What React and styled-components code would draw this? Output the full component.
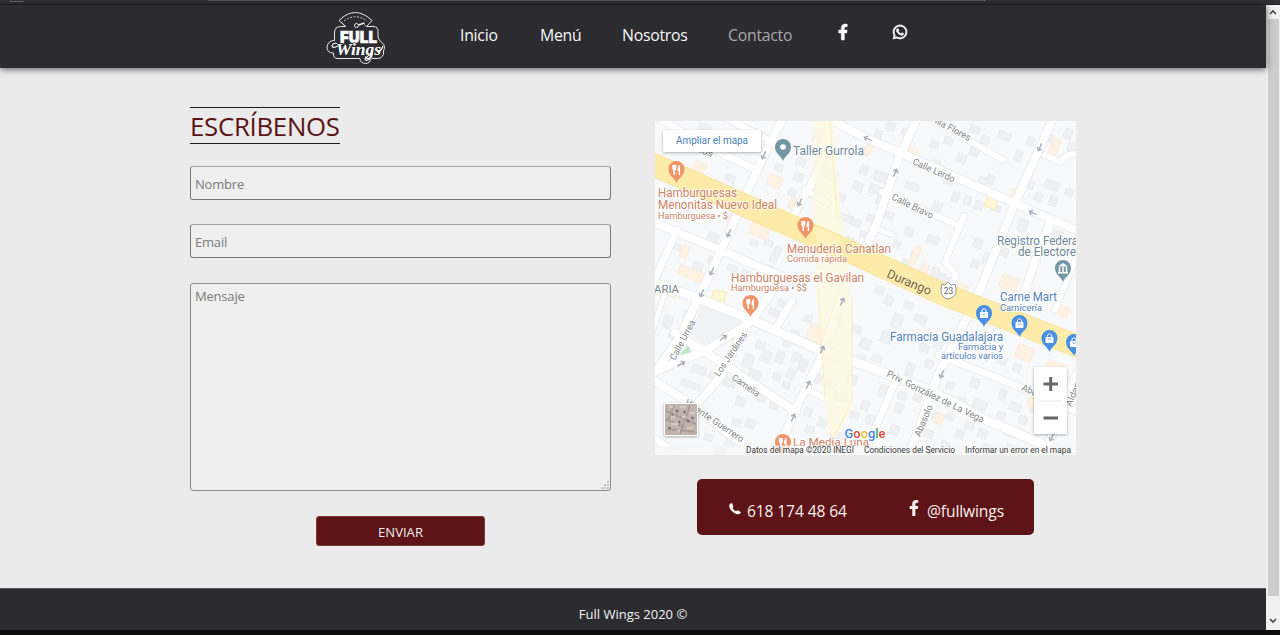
import React from "react";
import styled, { createGlobalStyle } from "styled-components";
import { FaFacebookF, FaWhatsapp } from "react-icons/fa";

const GlobalStyle = createGlobalStyle`
  * { box-sizing: border-box; }
  body {
    margin: 0;
    overflow: hidden;
    background: #0d0d0e;
    font-family: "Segoe UI", "Open Sans", "Noto Sans", sans-serif;
  }
`;

const Browser = styled.div`
  display: flex;
  flex-direction: column;
  width: 1280px;
  height: 635px;
`;

const Toolbar = styled.div`
  display: flex;
  flex: none;
  gap: 190px;
  height: 5px;
  padding-left: 9px;
  background: #303033;
  border-bottom: 1px solid #232326;
`;

const ToolbarButton = styled.div`
  width: 15px;
  height: 2px;
  border-bottom: 1px solid #68696c;
  border-radius: 0 0 8px 8px;
`;

const AddressBar = styled.div`
  width: 778px;
  height: 1px;
  margin-left: -6px;
  background: #55565a;
`;

const Viewport = styled.div`
  display: flex;
  height: 625px;
`;

const Page = styled.div`
  display: flex;
  flex-direction: column;
  width: 1266px;
  background: #ebebeb;
`;

const Header = styled.header`
  z-index: 1;
  display: flex;
  flex: none;
  height: 63px;
  padding-left: 326px;
  background: #2c2b30;
  box-shadow: 0 1px 7px rgba(0, 0, 0, 0.65);
`;

const LogoLink = styled.a`
  width: 134px;
  padding-top: 6px;
`;

const Nav = styled.nav`
  display: flex;
  align-items: flex-start;
  padding-top: 19px;
`;

const NavLink = styled.a`
  width: ${(p) => p.$w}px;
  font-size: 15.8px;
  letter-spacing: -0.25px;
  line-height: 22px;
  color: ${(p) => (p.$active ? "#a9a9ad" : "#f7f7f7")};
`;

const NavIcon = styled.a`
  display: flex;
  width: ${(p) => p.$w}px;
  font-size: 16px;
  line-height: 16px;
  color: #fff;
  svg {
    stroke: #fff;
    stroke-width: ${(p) => p.$bold || 0};
    overflow: visible;
  }
`;

const Main = styled.main`
  display: flex;
  flex: 1;
  gap: 44px;
  padding-left: 190px;
`;

const Form = styled.form`
  display: flex;
  flex-direction: column;
  align-items: flex-start;
  width: 421px;
  padding-top: 39px;
`;

const Title = styled.h1`
  width: 150px;
  height: 37px;
  margin: 0 0 22px;
  border: solid #1d1d1f;
  border-width: 1px 0;
  color: #5a1417;
  font-size: 25.8px;
  font-weight: 400;
  line-height: 37px;
  letter-spacing: -0.28px;
  white-space: nowrap;
`;

const Field = styled.input`
  width: 100%;
  height: 34px;
  margin: 0 0 24px;
  padding: 1px 4px 0;
  border: 1px solid #77797a;
  border-top-color: #a3a4a5;
  border-radius: 3px;
  background: #efefef;
  font: 13px "Segoe UI", "Open Sans", sans-serif;
  letter-spacing: -0.2px;
  &::placeholder { color: #7b7b7b; }
`;

const MessageBox = styled.div`
  position: relative;
  width: 100%;
  height: 234px;
`;

const Message = styled.textarea`
  width: 100%;
  height: 208px;
  margin: 1px 0 25px;
  padding: 3px 4px;
  border: 1px solid #8a8b8c;
  border-radius: 3px;
  background: #efefef;
  font: 13px/18px "Segoe UI", "Open Sans", sans-serif;
  letter-spacing: -0.2px;
  resize: none;
  &::placeholder { color: #7b7b7b; }
`;

const Grip = styled.svg`
  position: absolute;
  right: 2px;
  top: 199px;
`;

const Submit = styled.button`
  align-self: center;
  width: 169px;
  height: 30px;
  padding: 1px 0 0;
  border: 1px solid #7e3a2c;
  border-radius: 3px;
  background: #5e1416;
  color: #f3eeee;
  font: 13.1px "Segoe UI", "Open Sans", sans-serif;
`;

const Aside = styled.section`
  display: flex;
  flex-direction: column;
  align-items: center;
  width: 421px;
  padding-top: 53px;
`;

const MapFrame = styled.div`
  height: 334px;
  margin-bottom: 24px;
`;

const Contact = styled.div`
  display: flex;
  width: 337px;
  height: 56px;
  padding: 21px 0 0 32px;
  border-radius: 5px;
  background: #5e1416;
`;

const ContactItem = styled.a`
  display: flex;
  flex: none;
  align-items: flex-start;
  gap: ${(p) => p.$gap}px;
  width: ${(p) => p.$w}px;
  color: #f5efef;
  font-size: 15.6px;
  letter-spacing: -0.12px;
  line-height: 22px;
  white-space: nowrap;
`;

const PhoneIcon = styled.svg`
  flex: none;
  margin-top: 3px;
`;

const Footer = styled.footer`
  flex: none;
  height: 42px;
  padding-top: 16px;
  border-top: 1px solid #5e5e5f;
  background: #2c2b30;
  color: #f2f2f2;
  font-size: 13px;
  line-height: 18px;
  text-align: center;
`;

const Scrollbar = styled.div`
  display: flex;
  flex-direction: column;
  align-items: center;
  width: 14px;
  background: #f0f0f0;
`;

const Thumb = styled.div`
  width: 11px;
  height: 577px;
  background: #cdcdcd;
`;

const Arrow = styled.svg`
  flex: none;
  display: block;
  width: 14px;
  height: 14px;
  margin-top: ${(p) => (p.$down ? 18 : 0)}px;
  transform: ${(p) => (p.$down ? "rotate(180deg)" : "none")};
`;

function Logo() {
  return (
    <svg width="60" height="54" viewBox="0 0 60 54">
      <g fill="none" stroke="#e8e8e8" strokeWidth="1">
        <path d="M13 9.500Q29 -6.500 46 9.500L40.500 15.500H47Q52.500 15.500 52 21V26Q53 30 56 31.500Q60 35 57.500 40V43Q56 48 50 47.500H45Q44 52.500 39.500 52.500Q34 52 34 47.500H11Q7 47 7.500 42Q1 42 1 36Q2 29.500 8.500 29.500V22Q8.500 15.500 14.500 15.500H19.500Z" />
        <path d="M19.500 15.500L15 10.500M40.500 15.500L38 13.500" strokeWidth=".6" />
        <path d="M18 10Q29 1.500 41 10" strokeWidth=".8" strokeDasharray="2 1.500" />
        <circle cx="30.500" cy="14.500" r="2" />
        <path d="M32.500 14L38.500 12" strokeWidth="1.400" />
      </g>
      <text x="14" y="32" textLength="37" lengthAdjust="spacingAndGlyphs" fontFamily="Inter, sans-serif" fontWeight="900" fontSize="16.500" fill="#fff" stroke="#fff" strokeWidth=".5">FULL</text>
      <text x="10" y="44" textLength="45" lengthAdjust="spacingAndGlyphs" fontFamily="Liberation Serif, serif" fontStyle="italic" fontWeight="700" fontSize="17" fill="#fff" stroke="#2c2b30" strokeWidth="1.400" paintOrder="stroke">Wings</text>
      <path d="M12 35Q6 38 6 34.500Q7 31.500 11 32.500M44 48Q39 51 39 47.500Q42 44 47 43M52 41Q56 39 57 35" fill="none" stroke="#fff" strokeWidth="1.100" />
    </svg>
  );
}

const streets = [
  ["M655 223L727 253L790 280", 8],
  ["M640 278L698 298L752 320L815 348L866 366L932 391L982 418L1060 452", 9],
  ["M786 112L765 153L745 197L727 237L712 270L698 298L681 336L655 372", 8],
  ["M655 116L710 148L757 170", 7],
  ["M722 116L768 140L786 150", 7],
  ["M825 117L866 138L905 155L1012 202L1080 232", 8],
  ["M928 117L1003 160", 6],
  ["M920 112L898 160L878 220L866 248", 8],
  ["M822 160L812 183L798 207L790 222", 7],
  ["M805 190L828 203", 6],
  ["M882 192L957 225", 6],
  ["M964 216L945 262L956 275L952 286", 6],
  ["M1056 112L1015 203L982 285L968 315L938 375L908 458", 8],
  ["M1050 223L1038 252L1022 300", 8],
  ["M1045 155L1060 162Q1066 153 1078 154", 6],
  ["M873 227L893 235", 5],
  ["M938 355L1000 379L1080 413", 7],
  ["M895 382L868 446", 7],
  ["M1080 368L1060 410L1044 460", 8],
  ["M1076 258L1055 310", 6],
  ["M750 315L722 375L685 418", 8],
  ["M648 374L705 351L752 321L777 284", 8],
  ["M792 301L776 328", 7],
  ["M675 333L705 352L748 380L796 412", 8],
  ["M846 285L822 355L793 415L774 460", 8],
  ["M806 389L830 401L852 408", 6],
  ["M650 378L688 402L750 450", 8],
  ["M650 436L685 458", 7],
  ["M677 230L650 290", 7],
  ["M648 345L664 296", 5],
];

const blocks = [
  [675,128,11,7],[699,124,12,7],[736,130,9,8],[748,143,10,6],[712,182,13,8],[725,175,10,7],[660,196,12,8],[683,211,10,7],[724,190,8,9],
  [775,164,8,7],[796,158,10,8],[814,130,9,12],[794,173,9,8],[807,185,8,12],[788,189,8,7],[821,170,17,9],[835,193,10,8],[848,128,10,8],[860,147,9,8],
  [853,182,10,9],[838,214,14,7],[851,219,10,7],[860,232,12,6],[845,237,8,6],[860,165,8,9],[728,215,10,9],[707,233,11,12],[750,240,8,6],[764,240,9,6],[774,247,7,9],[770,255,7,7],[765,265,7,6],[692,262,10,13],[708,257,9,7],
  [727,265,10,6],[742,270,10,5],[673,244,8,6],[886,122,9,8],[875,130,7,9],[902,129,9,7],[930,141,9,7],[944,137,9,8],[957,154,9,9],[970,126,10,7],[970,147,9,9],[998,132,13,8],[1015,150,7,11],[981,136,8,8],[1027,137,7,9],
  [874,172,14,10],[869,185,13,9],[876,198,10,7],[905,183,14,7],[918,160,9,7],[932,160,8,7],[944,177,9,8],[952,192,7,10],[964,196,7,9],[975,201,8,9],[987,175,7,9],[979,177,8,7],[898,198,8,7],[933,202,9,9],[912,204,8,8],[885,212,9,7],[867,215,8,7],
  [993,205,8,7],[1006,215,7,9],[1018,219,9,13],[1034,193,9,8],[1045,181,14,9],[1028,181,6,8],[1049,196,8,10],[1065,189,8,7],[1045,134,8,8],[1064,129,8,10],[1068,143,8,9],
  [905,228,8,8],[927,236,12,8],[893,240,7,8],[911,251,8,7],[974,238,8,10],[983,253,10,12],[971,260,8,8],[931,268,7,11],[938,273,7,10],[946,278,6,8],[902,259,8,7],[1000,248,8,8],[1033,239,9,9],[1061,248,8,7],[1053,231,10,8],
  [683,312,12,8],[693,324,19,13],[683,340,7,7],[663,315,9,13],[669,331,9,8],[666,353,9,6],[681,382,20,6],[692,366,14,8],[709,373,8,6],[724,378,12,9],[736,397,9,9],[746,419,9,9],[732,419,9,7],[758,394,8,8],[770,401,8,8],[749,370,12,9],[761,351,10,11],[776,351,8,12],[792,353,9,9],[783,339,8,8],[756,341,9,8],[743,354,10,14],[773,373,8,7],[787,369,8,10],[782,382,8,6],[799,359,8,12],[815,330,8,9],[804,315,8,7],[790,330,9,7],[769,309,10,7],[778,300,8,7],
  [830,319,11,9],[852,325,9,8],[860,339,11,10],[856,355,9,8],[847,375,10,9],[832,393,15,13],[824,381,12,7],[812,374,10,9],[850,412,9,7],[861,401,8,9],[804,408,8,8],[818,418,9,9],[834,432,9,8],[805,426,9,7],[725,439,9,8],[704,434,9,7],[714,447,10,8],
  [872,355,10,7],[881,332,10,11],[892,314,10,14],[914,315,13,8],[905,335,9,7],[919,344,10,8],[906,363,8,13],[925,360,8,8],[934,341,9,8],[879,385,8,12],[898,392,9,8],[895,403,8,10],[913,394,8,7],[946,382,8,8],[971,378,8,10],[957,397,9,7],[973,400,14,9],[999,389,7,11],[1009,403,12,8],[997,412,8,7],[1019,416,8,8],[1004,428,9,8],[965,422,9,8],[978,429,9,9],[956,430,8,8],[946,413,8,7],[932,413,9,8],[924,430,9,8],[941,441,8,7],[983,445,10,7],[1006,445,9,8],[890,425,9,10],[873,448,8,6],[959,342,8,6],[998,357,9,7],[981,354,8,6],[1013,364,8,8],[885,296,8,9],[875,286,9,8],[904,302,9,7],[1030,405,8,8],[866,415,9,9],
];

const shops = [
  [693,162,12,14],[768,176,14,11],[750,224,19,13],[681,245,7,13],[678,269,27,10],[789,200,14,10],[908,148,9,9],[1011,190,10,9],[1050,138,8,20],[866,143,6,11],[912,246,6,19],[920,264,8,11],[1000,276,18,14],[956,284,12,9],[808,326,18,16],[1016,346,17,14],[1046,362,18,12],[1028,398,8,9],[935,413,8,11],[1055,306,14,10],[788,226,10,12],[666,289,10,8],
];

const arrows = [
  [764,155,205],[800,202,205],[729,233,205],[712,271,205],[895,173,25],[868,139,-65],[1040,147,205],[1033,213,-65],[702,293,205],[723,338,55],[681,364,60],[842,302,25],[822,350,25],[808,385,25],[793,418,25],[942,374,205],[1052,437,205],
];

function Label({ x, y, w, size = 11.5, color = "#cb8467", rotate = 0, children }) {
  return (
    <text
      x={x}
      y={y}
      textLength={w}
      lengthAdjust="spacingAndGlyphs"
      fontSize={size}
      fill={color}
      stroke="#fff"
      strokeWidth="2"
      strokeOpacity=".7"
      paintOrder="stroke"
      transform={rotate ? `rotate(${rotate} ${x} ${y})` : undefined}
    >
      {children}
    </text>
  );
}

function Pin({ x, y, color, kind }) {
  return (
    <g transform={`translate(${x} ${y})`}>
      <path d="M0 11C-1.500 6 -8 4 -8 -3A8 8 0 0 1 8 -3C8 4 1.500 6 0 11Z" fill={color} />
      {kind === "food" && (
        <g>
          <path d="M-4.200 -7H-.2V-3.500Q-.2 -2 -1.400 -1.600V3H-3V-1.600Q-4.200 -2 -4.200 -3.500Z" fill="#fff" />
          <path d="M3.600 -7V3H2.200V-1H1Q.8 -6.500 3.600 -7Z" fill="#fff" />
        </g>
      )}
      {kind === "dot" && <circle cy="-3" r="2.800" fill="#fff" />}
      {kind === "bag" && (
        <g>
          <rect x="-4" y="-4" width="8" height="6" rx=".7" fill="#fff" />
          <path d="M-2 -4V-6Q0 -9 2 -6V-4" fill="none" stroke="#fff" />
          <path d="M-1.500 -2.500Q0 0 1.500 -2.500" fill="none" stroke={color} strokeWidth=".8" />
        </g>
      )}
      {kind === "civic" && (
        <g fill="#fff">
          <path d="M-5 -4.500L0 -8L5 -4.500ZM-5 1H5V2.500H-5Z" />
          <path d="M-3.500 -4V1M0 -4V1M3.500 -4V1" stroke="#fff" strokeWidth="1.500" />
        </g>
      )}
    </g>
  );
}

function CityMap() {
  const blue = "#5483ba";
  const slate = "#70899a";
  const road = "#85878b";
  return (
    <svg width="421" height="334" viewBox="655 121 421 334" fontFamily="Roboto, sans-serif" display="block">
      <rect x="655" y="121" width="421" height="334" fill="#f8f9fb" />
      <g fill="#eff0f2" stroke="#e7e8eb" strokeWidth=".6">
        {blocks.map(([x, y, w, h]) => (
          <rect key={`${x}-${y}`} x={x} y={y} width={w} height={h} transform={`rotate(20 ${x + w / 2} ${y + h / 2})`} />
        ))}
      </g>
      <g fill="#fef2e3" stroke="#fbe9d4" strokeWidth=".6">
        {shops.map(([x, y, w, h]) => (
          <rect key={`${x}-${y}`} x={x} y={y} width={w} height={h} transform={`rotate(22 ${x + w / 2} ${y + h / 2})`} />
        ))}
      </g>
      <path d="M704 298L690 334L706 346L740 322Z" fill="#f1f2f3" />
      <path d="M988 195L998 197L995 210L984 206ZM714 290L727 292L723 305L710 301Z" fill="#fff6d3" stroke="#f7ebb8" />
      <g fill="none" strokeLinecap="round" strokeLinejoin="round">
        {streets.map(([d, w]) => <path key={d} d={d} stroke="#e3e4e8" strokeWidth={w + 1.2} />)}
        {streets.map(([d, w]) => <path key={`${d}-top`} d={d} stroke="#ffffff" strokeWidth={w} />)}
      </g>
      <path d="M679 355L688 346L691 352Z" fill="#b9e6c4" />
      <path d="M814 117H833L840 200L850 288L853 408L834 438L829 435L824 395L817 288L813 240Z" fill="#fff8dd" opacity=".75" />
      <path d="M830 121L837 215M852 300V400L834 438L829 433M818 288L825 398" fill="none" stroke="#fbeebb" strokeWidth=".9" />
      <g fill="none">
        <path d="M645 161L735 201L866 259L945 295L1085 349" stroke="#f6e2a0" strokeWidth="23" />
        <path d="M645 161L735 201L866 259L945 295L1085 349" stroke="#fdeca9" strokeWidth="21.500" />
      </g>
      <path d="M814 226L838 236L846 260L818 248Z" fill="#fff3c4" opacity=".7" />
      <g fill="none" stroke="#aeb0be" strokeWidth="1.500">
        {arrows.map(([x, y, r]) => (
          <path key={`${x}-${y}`} d="M0 4V-4M-2.500 -1L0 -4L2.500 -1" transform={`translate(${x} ${y}) rotate(${r})`} />
        ))}
      </g>

      <Label x={696} y={151} w={17} size={9} color={road} rotate={22}>nos</Label>
      <Label x={929} y={120} w={45} size={9.5} color={road} rotate={28}>Villa Flores</Label>
      <Label x={912} y={164} w={45} size={9.5} color={road} rotate={24}>Calle Lerdo</Label>
      <Label x={891} y={199} w={45} size={9.5} color={road} rotate={26}>Calle Bravo</Label>
      <Label x={675} y={361} w={44} size={9.5} color={road} rotate={-62}>Calle Urrea</Label>
      <Label x={719} y={377} w={51} size={9.5} color={road} rotate={-56}>Los Jardines</Label>
      <Label x={731} y={379} w={32} size={9.5} color={road} rotate={35}>Camelia</Label>
      <Label x={684} y={404} w={69} size={9.5} color={road} rotate={34}>Vicente Guerrero</Label>
      <Label x={886} y={376} w={107} size={9.5} color={road} rotate={26}>Priv. González de La Vega</Label>
      <Label x={920} y={437} w={33} size={9.5} color={road} rotate={-67}>Abasolo</Label>
      <Label x={1021} y={390} w={33} size={9.5} color={road} rotate={23}>Abasolo</Label>
      <Label x={1071} y={407} w={34} size={9.5} color={road} rotate={-67}>Aldama</Label>
      <text x="886" y="277" textLength="47" lengthAdjust="spacingAndGlyphs" fontSize="12.500" fill="#776040" stroke="#fff1bb" strokeWidth="2" paintOrder="stroke" transform="rotate(23 886 277)">Durango</text>
      <path d="M942 284L945 285L948 282L951 285L955 284L956 289Q957 297 948 299Q940 297 941 289Z" fill="#fff" stroke="#96958f" />
      <text x="948.500" y="294" textAnchor="middle" fontSize="8.500" fill="#66655f">23</text>

      <Label x={793} y={154.5} w={71} size={12} color={slate}>Taller Gurrola</Label>
      <Label x={658} y={197} w={79} size={12}>Hamburguesas</Label>
      <Label x={658} y={208.5} w={119} size={12}>Menonitas Nuevo Ideal</Label>
      <Label x={658} y={218.5} w={70} size={9.5}>Hamburguesa • $</Label>
      <Label x={787} y={253} w={104} size={12}>Menuderia Canatlan</Label>
      <Label x={787} y={262} w={60} size={9.5}>Comida rápida</Label>
      <Label x={731} y={282} w={133} size={12}>Hamburguesas el Gavilan</Label>
      <Label x={731} y={291} w={76} size={9.5}>Hamburguesa • $$</Label>
      <Label x={654} y={293} w={25} size={11} color="#7c838b">ARIA</Label>
      <Label x={997} y={244.5} w={84} size={12} color={slate}>Registro Federal</Label>
      <Label x={1018} y={256} w={64} size={12} color={slate}>de Electores</Label>
      <Label x={1000} y={301} w={57} size={12} color={blue}>Carne Mart</Label>
      <Label x={1000} y={311} w={42} size={9.5} color={blue}>Carnicería</Label>
      <Label x={890} y={341} w={113} size={12} color={blue}>Farmacia Guadalajara</Label>
      <Label x={958} y={350} w={45} size={9.5} color={blue}>Farmacia y</Label>
      <Label x={941} y={359} w={62} size={9.5} color={blue}>artículos varios</Label>
      <Label x={793} y={446} w={76} size={11.5}>La Media Luna</Label>

      <Pin x={783} y={150} color="#7596a5" kind="dot" />
      <Pin x={676.5} y={172} color="#ef9368" kind="food" />
      <Pin x={805.5} y={228} color="#ef9368" kind="food" />
      <Pin x={750.5} y={306} color="#ef9368" kind="food" />
      <Pin x={783} y={445} color="#ef9368" kind="food" />
      <Pin x={1063} y={271} color="#7596a5" kind="civic" />
      <Pin x={984} y={316} color="#4a8fe2" kind="bag" />
      <Pin x={1019.5} y={326} color="#4a8fe2" kind="bag" />
      <Pin x={1049.5} y={341} color="#4a8fe2" kind="bag" />
      <Pin x={1074} y={345} color="#4a8fe2" kind="bag" />

      <rect x="655" y="445.500" width="421" height="10" fill="#f6f6f7" opacity=".78" />
      <g fontSize="8.800" fill="#3c3c3c">
        <text x="746" y="453" textLength="108" lengthAdjust="spacingAndGlyphs">Datos del mapa ©2020 INEGI</text>
        <text x="864" y="453" textLength="91" lengthAdjust="spacingAndGlyphs">Condiciones del Servicio</text>
        <text x="965" y="453" textLength="106" lengthAdjust="spacingAndGlyphs">Informar un error en el mapa</text>
      </g>
      <text x="844.500" y="438" textLength="41" lengthAdjust="spacingAndGlyphs" fontSize="13" fontWeight="500" stroke="#fff" strokeWidth="2" paintOrder="stroke">
        <tspan fill="#4583e8">G</tspan><tspan fill="#dd4b3e">o</tspan><tspan fill="#f2b92b">o</tspan><tspan fill="#4583e8">g</tspan><tspan fill="#3ba45b">l</tspan><tspan fill="#dd4b3e">e</tspan>
      </text>

      <g filter="drop-shadow(0 1px 1.500px rgba(0,0,0,.3))">
        <rect x="663" y="130" width="98" height="22" rx="1" fill="#fff" />
        <rect x="1034" y="367" width="33" height="67" rx="1.500" fill="#fff" />
        <rect x="664" y="403" width="34" height="33" rx="1" fill="#fff" />
      </g>
      <text x="676" y="144" textLength="72" lengthAdjust="spacingAndGlyphs" fontSize="10.500" fill="#4a80b5">Ampliar el mapa</text>
      <path d="M1039 401H1062" stroke="#e6e6e6" />
      <path d="M1043.500 384H1058M1050.700 377V391M1043.500 418H1058" stroke="#666" strokeWidth="3" />
      <rect x="665" y="404" width="32" height="31" fill="#c0b3ad" />
      <g fill="none">
        <path d="M666 411L696 424M667 429L695 432M674 405L668 421M690 405L680 434M665 419L684 427" stroke="#a39a95" strokeWidth="1.500" />
        <path d="M669 407H673M680 407H686M690 413H695M671 417H675M682 417H686M671 424H678M687 428H693M677 431H680" stroke="#d6c9c3" strokeWidth="2.500" />
        <path d="M676 410L678 412M687 420L689 422M669 427L670 429M684 411L685 413M679 421L680 423M692 417L693 419M672 414L673 415" stroke="#6e6864" strokeWidth="2" />
      </g>
    </svg>
  );
}

function ScrollArrow({ down }) {
  return (
    <Arrow $down={down} viewBox="0 0 14 14">
      <path d="M4 9L7 6L10 9" fill="none" stroke="#4d4d4d" strokeWidth="1.700" />
    </Arrow>
  );
}

export default function App() {
  return (
    <Browser>
      <GlobalStyle />
      <Toolbar>
        <ToolbarButton />
        <AddressBar />
      </Toolbar>
      <Viewport>
        <Page>
          <Header>
            <LogoLink><Logo /></LogoLink>
            <Nav>
              <NavLink $w={80}>Inicio</NavLink>
              <NavLink $w={82}>Menú</NavLink>
              <NavLink $w={106}>Nosotros</NavLink>
              <NavLink $w={107} $active>Contacto</NavLink>
              <NavIcon $w={57} $bold={14}><FaFacebookF /></NavIcon>
              <NavIcon $w={20} $bold={22}><FaWhatsapp /></NavIcon>
            </Nav>
          </Header>
          <Main>
            <Form>
              <Title>ESCRÍBENOS</Title>
              <Field placeholder="Nombre" />
              <Field placeholder="Email" />
              <MessageBox>
                <Message placeholder="Mensaje" />
                <Grip width="8" height="8" viewBox="0 0 8 8">
                  <path d="M6 0h2v2H6zM3 3h2v2H3zM6 3h2v2H6zM0 6h2v2H0zM3 6h2v2H3zM6 6h2v2H6z" fill="#c2c2c2" />
                </Grip>
              </MessageBox>
              <Submit type="button">ENVIAR</Submit>
            </Form>
            <Aside>
              <MapFrame><CityMap /></MapFrame>
              <Contact>
                <ContactItem $gap={6} $w={177}>
                  <PhoneIcon width="12" height="12" viewBox="0 0 12 12">
                    <path d="M3 .3L4.300 3.200Q4.500 4 3.400 4.800Q4.500 7.300 7.200 8.200Q8.200 7.200 9 7.400L11.800 9Q12.200 9.600 11 10.600Q9.600 11.800 7.400 11Q2 9 .4 4Q-.2 1.600 1.400 .6Q2.600 0 3 .3Z" fill="#fff" />
                  </PhoneIcon>
                  618 174 48 64
                </ContactItem>
                <ContactItem $gap={5} $w={110}>
                  <FaFacebookF size={16} />
                  @fullwings
                </ContactItem>
              </Contact>
            </Aside>
          </Main>
          <Footer>Full Wings 2020 ©</Footer>
        </Page>
        <Scrollbar>
          <ScrollArrow />
          <Thumb />
          <ScrollArrow down />
        </Scrollbar>
      </Viewport>
    </Browser>
  );
}
